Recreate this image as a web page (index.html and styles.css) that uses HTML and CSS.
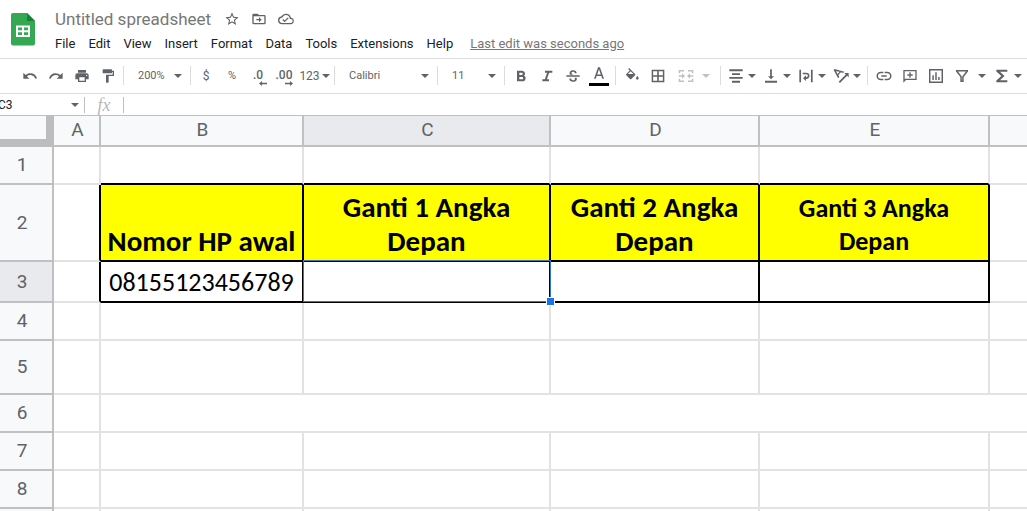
FILE: index.html
```html
<!DOCTYPE html>
<html lang="en">
<head>
    <meta charset="UTF-8">
    <meta name="viewport" content="width=device-width, initial-scale=1.0">
    <title>Untitled spreadsheet</title>
    <link rel="stylesheet" href="styles.css">
</head>
<body>
    <header class="header">
        <a class="logo" href="#" aria-label="Sheets home">
            <svg width="24" height="33" viewBox="0 0 24 33">
                <path fill="#34a853" d="M2 0h14l8 8v22.500a2 2 0 0 1-2 2H2a2 2 0 0 1-2-2V2a2 2 0 0 1 2-2z"/>
                <path fill="#188038" d="M16 0l8 8h-8z"/>
                <path fill="#fff" fill-rule="evenodd" d="M5 12.500h14v11.500H5zM7 14.500v2.700h4v-2.700zM13 14.500v2.700h4v-2.700zM7 19.300v2.700h4v-2.700zM13 19.300v2.700h4v-2.700z"/>
            </svg>
        </a>
        <div class="header-main">
            <div class="title-row">
                <input class="doc-title" type="text" value="Untitled spreadsheet" aria-label="Document name">
                <button class="title-button" aria-label="Star">
                    <svg width="16" height="16" viewBox="0 0 24 24"><path d="M22 9.240l-7.190-.620L12 2 9.190 8.630 2 9.240l5.460 4.730L5.820 21 12 17.270 18.180 21l-1.630-7.030L22 9.240zM12 15.400l-3.760 2.270 1-4.280-3.320-2.880 4.380-.380L12 6.100l1.710 4.040 4.380.380-3.320 2.880 1 4.280L12 15.400z"/></svg>
                </button>
                <button class="title-button" aria-label="Move">
                    <svg width="16" height="16" viewBox="0 0 24 24"><path d="M20 6h-8l-2-2H4a2 2 0 0 0-2 2v12a2 2 0 0 0 2 2h16a2 2 0 0 0 2-2V8a2 2 0 0 0-2-2zm0 12H4V8h16v10zM12 17l4-4-4-4v3H8v2h4z"/></svg>
                </button>
                <button class="title-button" aria-label="Document status">
                    <svg width="16" height="16" viewBox="0 0 24 24"><path d="M19.350 10.040A7.490 7.490 0 0 0 12 4C9.110 4 6.600 5.640 5.350 8.040A6 6 0 0 0 6 20h13a5 5 0 0 0 .350-9.960zM19 18H6a4 4 0 0 1-.440-7.970l1.070-.110.500-.950A5.470 5.470 0 0 1 12 6c2.620 0 4.880 1.860 5.390 4.430l.300 1.500 1.530.110A2.980 2.980 0 0 1 19 18zm-9-3.800l-2.100-2.100-1.400 1.400L10 17l6-6-1.400-1.400z"/></svg>
                </button>
            </div>
            <nav class="menu">
                <button>File</button>
                <button>Edit</button>
                <button>View</button>
                <button>Insert</button>
                <button>Format</button>
                <button>Data</button>
                <button>Tools</button>
                <button>Extensions</button>
                <button>Help</button>
                <a href="#" class="last-edit">Last edit was seconds ago</a>
            </nav>
        </div>
    </header>

    <div class="toolbar">
        <div class="group group-first">
            <button class="tool" aria-label="Undo"><svg class="icon" viewBox="0 0 24 24"><path d="M12.500 8c-2.650 0-5.050.990-6.900 2.600L2 7v9h9l-3.620-3.620A8.020 8.020 0 0 1 20.090 16l2.370-.780A10.500 10.500 0 0 0 12.500 8z"/></svg></button>
            <button class="tool" aria-label="Redo"><svg class="icon" viewBox="0 0 24 24"><path d="M18.400 10.600A10.480 10.480 0 0 0 11.500 8 10.500 10.500 0 0 0 1.540 15.220L3.900 16a8.020 8.020 0 0 1 12.710-3.620L13 16h9V7z"/></svg></button>
            <button class="tool" aria-label="Print"><svg class="icon" viewBox="0 0 24 24"><path d="M19 8H5a3 3 0 0 0-3 3v6h4v4h12v-4h4v-6a3 3 0 0 0-3-3zm-3 11H8v-5h8v5zm3-7a1 1 0 1 1 0-2 1 1 0 0 1 0 2zM18 3H6v4h12z"/></svg></button>
            <button class="tool" aria-label="Paint format"><svg class="icon" viewBox="0 0 24 24"><path d="M18 4V3a1 1 0 0 0-1-1H5a1 1 0 0 0-1 1v4a1 1 0 0 0 1 1h12a1 1 0 0 0 1-1V6h1v4H9v11a1 1 0 0 0 1 1h2a1 1 0 0 0 1-1v-9h8V4z"/></svg></button>
        </div>
        <div class="group">
            <div class="pick pick-small">
                <select aria-label="Zoom"><option>200%</option></select>
                <span class="caret"></span>
            </div>
        </div>
        <div class="group">
            <button class="tool" aria-label="Format as currency">$</button>
            <button class="tool tool-percent" aria-label="Format as percent">%</button>
            <button class="tool decimals" aria-label="Decrease decimal places">.0<svg width="8" height="5" viewBox="0 0 8 5"><path d="M0 2.500L3 0v1.700h5v1.600H3V5z"/></svg></button>
            <button class="tool decimals" aria-label="Increase decimal places">.00<svg width="8" height="5" viewBox="0 0 8 5"><path d="M8 2.500L5 0v1.700H0v1.600h5V5z"/></svg></button>
            <button class="tool formats" aria-label="More formats">123<span class="caret"></span></button>
        </div>
        <div class="group">
            <div class="pick pick-font">
                <select aria-label="Font"><option>Calibri</option></select>
                <span class="caret"></span>
            </div>
        </div>
        <div class="group">
            <div class="pick pick-small">
                <select aria-label="Font size"><option>11</option></select>
                <span class="caret"></span>
            </div>
        </div>
        <div class="group roomy">
            <button class="tool" aria-label="Bold"><svg class="icon" viewBox="0 0 24 24"><path d="M16.400 11.800c1-.700 1.700-1.900 1.700-3C18.100 6 16 4 13.300 4H6v16h8.200c2.700 0 4.700-2.200 4.700-4.700 0-1.700-1-3.100-2.500-3.500zM9.500 7H13a1.700 1.700 0 0 1 0 3.400H9.500zm4 10h-4v-3.600h4a1.800 1.800 0 0 1 0 3.600z"/></svg></button>
            <button class="tool" aria-label="Italic"><svg class="icon" viewBox="0 0 24 24"><path d="M9 4v3h3.200L8.800 17H5v3h10v-3h-3.200l3.400-10H20V4z"/></svg></button>
            <button class="tool" aria-label="Strikethrough"><svg class="icon" viewBox="0 0 24 24"><path d="M2 11h20v2.300H2zM7.300 10C6 6 8.200 3.300 12.200 3.300c3.200 0 5.200 1.700 5.300 4.500h-2.800c0-1.400-.900-2.200-2.600-2.200-2.600 0-3.300 2-1.500 3.400l1.700 1zM17.500 14.500c1 3.800-1.400 6.200-5.300 6.200-3.500 0-5.700-1.900-5.800-4.900h2.800c.1 1.700 1.200 2.600 3.100 2.600 2.200 0 3.200-1.500 2.200-3.900z"/></svg></button>
            <button class="tool text-color" aria-label="Text color"><svg class="icon" viewBox="0 0 24 24"><path d="M10.600 2L4.500 19h2.600l1.400-4h7l1.400 4h2.600L13.400 2zm-1.300 10.800L12 5l2.700 7.800z"/></svg></button>
        </div>
        <div class="group roomy">
            <button class="tool" aria-label="Fill color"><svg class="icon" viewBox="0 0 24 24"><path fill-rule="evenodd" d="M16.560 8.940L7.620 0 6.210 1.410l2.380 2.380-5.150 5.150a1.490 1.490 0 0 0 0 2.120l5.500 5.500c.600.590 1.550.590 2.120 0l5.500-5.500a1.490 1.490 0 0 0 0-2.120zM5.800 9L10 4.800 14.200 9zM20 12s-2 2.170-2 3.500a2 2 0 0 0 4 0C22 14.170 20 12 20 12z"/></svg></button>
            <button class="tool" aria-label="Borders"><svg class="icon" viewBox="0 0 24 24"><path d="M2.500 2.500v19h19v-19zm8.300 16.800H4.700v-6.100h6.100zm0-8.500H4.700V4.700h6.100zm8.500 8.500h-6.100v-6.100h6.100zm0-8.500h-6.100V4.700h6.100z"/></svg></button>
            <button class="tool merge" aria-label="Merge cells" disabled><svg class="icon" viewBox="0 0 24 24"><path d="M1 3h8v2.200H3.200V8H1zM15 3h8v5h-2.200V5.200H15zM1 16h2.200v2.800H9V21H1zM20.800 16H23v5h-8v-2.200h5.800zM1 11h5V8l4.500 4L6 16v-3H1zM23 11h-5V8l-4.500 4 4.500 4v-3h5z"/></svg><span class="caret"></span></button>
        </div>
        <div class="group roomy">
            <button class="tool drop" aria-label="Horizontal align"><svg class="icon" viewBox="0 0 24 24"><path d="M2 2h20v2.800H2zM6 7.700h12v2.800H6zM2 13.500h20v2.800H2zM6 19.200h12V22H6z"/></svg><span class="caret"></span></button>
            <button class="tool drop" aria-label="Vertical align"><svg class="icon" viewBox="0 0 24 24"><path d="M16.500 12.500H13.300V2h-2.600v10.500H7.500L12 17zM3 19.300h18V22H3z"/></svg><span class="caret"></span></button>
            <button class="tool drop" aria-label="Text wrapping"><svg class="icon" viewBox="0 0 24 24"><path d="M2 2.500h2.600v19H2zM19.400 2.500H22v19h-2.600zM7 7h5.500a4.700 4.700 0 0 1 0 9.400H12v3.100l-4.500-4.300L12 11v2.900h.500a2.200 2.200 0 0 0 0-4.400H7z"/></svg><span class="caret"></span></button>
            <button class="tool drop" aria-label="Text rotation"><svg class="icon" viewBox="0 0 24 24"><path fill-rule="evenodd" d="M1 3l1.500-1.500L17 5.500 15.300 7.500l-3.300-1-4 4 1.500 3L7.600 15.500zM4.500 4.700l2.300 4.300L10 5.800zM8.500 20.500L19.200 9.800 17 7.600h6.500v6.500l-2.300-2.300L10.500 22.500z"/></svg><span class="caret"></span></button>
        </div>
        <div class="group roomy">
            <button class="tool" aria-label="Insert link"><svg class="icon" viewBox="0 0 24 24"><path d="M3 12a4 4 0 0 1 4-4h4V5.700H7a6.300 6.300 0 0 0 0 12.600h4V16H7a4 4 0 0 1-4-4zm5 1.200h8v-2.400H8zm9-7.500h-4V8h4a4 4 0 0 1 0 8h-4v2.300h4a6.300 6.300 0 0 0 0-12.600z"/></svg></button>
            <button class="tool" aria-label="Insert comment"><svg class="icon" viewBox="0 0 24 24"><path d="M2 3v19l4-4h16V3zm18 13H4V5h16zM11 14.500h2v-3h3v-2h-3v-3h-2v3H8v2h3z"/></svg></button>
            <button class="tool" aria-label="Insert chart"><svg class="icon" viewBox="0 0 24 24"><path d="M1.500 1.500v21h21v-21zm18.800 18.800H3.700V3.700h16.600zM6.500 11h2.200v7H6.500zM10.900 6.500h2.200V18h-2.200zM15.300 13.500h2.200V18h-2.200z"/></svg></button>
            <button class="tool filter" aria-label="Create a filter"><svg class="icon" viewBox="0 0 24 24"><path d="M3 3v2.200l6.500 8.300V21h5v-7.500L21 5.200V3zm9.300 9.700v6.100h-.600v-6.100L6 5.200h12z"/></svg><span class="caret"></span></button>
            <button class="tool drop" aria-label="Functions"><svg class="icon" viewBox="0 0 24 24"><path d="M20 2.500H3.500v2.800l7.500 6.700-7.500 6.700v2.800H20v-3.200H9L15.800 12 9 5.700h11z"/></svg><span class="caret"></span></button>
        </div>
    </div>

    <div class="formula-bar">
        <input class="name-box" type="text" value="C3" aria-label="Name box">
        <span class="caret"></span>
        <label class="fx" for="formula">fx</label>
        <input class="formula" id="formula" type="text">
    </div>

    <main class="sheet-view">
        <table class="sheet">
            <colgroup>
                <col class="col-head">
                <col class="col-a">
                <col class="col-b">
                <col class="col-c">
                <col class="col-d">
                <col class="col-e">
                <col>
            </colgroup>
            <thead>
                <tr>
                    <td class="corner"></td>
                    <th>A</th>
                    <th>B</th>
                    <th class="active">C</th>
                    <th>D</th>
                    <th>E</th>
                    <th></th>
                </tr>
            </thead>
            <tbody>
                <tr class="above-box">
                    <th>1</th>
                    <td></td>
                    <td class="boxed"></td>
                    <td class="boxed"></td>
                    <td class="boxed"></td>
                    <td class="boxed"></td>
                    <td></td>
                </tr>
                <tr class="box-row titles">
                    <th>2</th>
                    <td class="box-left"></td>
                    <td class="boxed title">Nomor HP awal</td>
                    <td class="boxed title">Ganti 1 Angka Depan</td>
                    <td class="boxed title">Ganti 2 Angka Depan</td>
                    <td class="boxed title title-small">Ganti 3 Angka Depan</td>
                    <td></td>
                </tr>
                <tr class="box-row numbers">
                    <th class="active">3</th>
                    <td class="box-left"></td>
                    <td class="boxed">08155123456789</td>
                    <td class="boxed selected"><div class="selection"></div></td>
                    <td class="boxed"></td>
                    <td class="boxed"></td>
                    <td></td>
                </tr>
                <tr>
                    <th>4</th>
                    <td></td><td></td><td></td><td></td><td></td><td></td>
                </tr>
                <tr class="tall">
                    <th>5</th>
                    <td></td><td></td><td></td><td></td><td></td><td></td>
                </tr>
                <tr>
                    <th>6</th>
                    <td></td><td colspan="5"></td>
                </tr>
                <tr>
                    <th>7</th>
                    <td></td><td></td><td></td><td></td><td></td><td></td>
                </tr>
                <tr>
                    <th>8</th>
                    <td></td><td></td><td></td><td></td><td></td><td></td>
                </tr>
                <tr class="cut-off">
                    <th></th>
                    <td></td><td></td><td></td><td></td><td></td><td></td>
                </tr>
            </tbody>
        </table>
    </main>
</body>
</html>
```
FILE: styles.css
```css
* {
    box-sizing: border-box;
}
body {
    display: flex;
    flex-direction: column;
    margin: 0;
    height: 100vh;
    overflow: hidden;
    background: #fff;
    color: #202124;
    font-family: Roboto, Arial, sans-serif;
    font-size: 13px;
}
button, input, select {
    margin: 0;
    padding: 0;
    border: none;
    background: none;
    color: inherit;
    font: inherit;
    outline: none;
}
button {
    cursor: pointer;
}
svg {
    display: block;
    fill: currentColor;
}

/* header */
.header {
    display: flex;
    flex-shrink: 0;
    height: 59px;
    border-bottom: 1px solid #dadce0;
}
.logo {
    padding: 13px 13px 0 11px;
}
.header-main {
    padding: 7px 0 0 7px;
}
.title-row {
    display: flex;
    align-items: center;
    gap: 11px;
    height: 24px;
    color: #5f6368;
}
.doc-title {
    width: 158px;
    height: 24px;
    color: #777;
    font-size: 17px;
}
.menu {
    display: flex;
    align-items: center;
    gap: 13px;
    height: 24px;
}
.last-edit {
    margin-left: 4px;
    color: #777;
}

/* toolbar */
.toolbar {
    display: flex;
    flex-shrink: 0;
    align-items: center;
    height: 35px;
    padding: 0 0 1px 14px;
    border-bottom: 1px solid #dadce0;
    color: #5f6368;
    font-size: 12px;
}
.group {
    display: flex;
    flex-shrink: 0;
    align-items: center;
    height: 19px;
    padding: 0 2px;
    border-left: 1px solid #dadce0;
}
.group-first {
    border-left-color: transparent;
}
.roomy {
    padding: 0 3px;
}
.tool {
    display: flex;
    align-items: center;
    justify-content: center;
    width: 26px;
    height: 26px;
}
.icon {
    flex-shrink: 0;
    width: 16px;
    height: 16px;
}
.caret {
    flex-shrink: 0;
    width: 0;
    height: 0;
    border: 4px solid transparent;
    border-top-color: currentColor;
    border-bottom: none;
}
.tool-percent, .pick-small {
    font-size: 11px;
}
.decimals {
    flex-direction: column;
    align-items: center;
    font-weight: 500;
    line-height: 12px;
    padding-top: 4px;
}
.decimals svg {
    align-self: flex-end;
    margin-right: 4px;
}
.formats {
    width: 35px;
    gap: 2px;
}
.pick {
    display: flex;
    align-items: center;
    padding: 0 6px 0 12px;
}
.pick select {
    flex: 1;
    min-width: 0;
    appearance: none;
}
.pick-small {
    width: 62px;
}
.pick-font {
    width: 98px;
    font-size: 11px;
}
.text-color .icon {
    box-sizing: content-box;
    padding: 0 2px 1px;
    border-bottom: 3px solid #000;
}
.merge {
    width: 46px;
    gap: 8px;
    color: #bdc1c6;
    cursor: default;
}
.drop {
    width: 35px;
    gap: 4px;
}
.filter {
    width: 41px;
    gap: 8px;
}

/* formula bar */
.formula-bar {
    display: flex;
    flex-shrink: 0;
    align-items: center;
    height: 22px;
    border-bottom: 1px solid #c0c0c0;
    color: #5f6368;
}
.name-box {
    width: 73px;
    margin-left: -2px;
    color: #202124;
    font-size: 12px;
}
.fx {
    width: 40px;
    margin-left: 5px;
    border: solid #c0c0c0;
    border-width: 0 1px;
    color: #b7b7b7;
    font: italic 18px/16px "Liberation Serif", serif;
    text-align: center;
}
.formula {
    flex: 1;
    padding-left: 6px;
}

/* grid */
.sheet-view {
    flex: 1;
    min-height: 0;
    overflow: hidden;
}
.sheet {
    width: 100%;
    table-layout: fixed;
    border-spacing: 0;
}
.col-head {
    width: 54px;
}
.col-a {
    width: 47px;
}
.col-b {
    width: 203px;
}
.col-c {
    width: 247px;
}
.col-d {
    width: 209px;
}
.col-e {
    width: 230px;
}
.sheet th, .sheet td {
    padding: 0;
    border: solid #e2e2e2;
    border-width: 0 2px 2px 0;
}
.sheet th {
    background: #f8f9fa;
    border-color: #c0c0c0;
    color: #5f6368;
    font-size: 19px;
    font-weight: normal;
    line-height: 22px;
}
.sheet tbody th {
    padding-right: 8px;
}
.sheet th.active {
    background: #e8eaed;
}
.sheet tr {
    height: 38px;
}
.sheet thead tr {
    height: 31px;
}
.sheet thead th {
    padding: 0 0 2px 2px;
}
.sheet td:last-child, .sheet thead th:last-child {
    border-right: none;
}
.sheet .corner {
    background: #f8f9fa;
    border: solid #bdbdbd;
    border-width: 0 8px 8px 0;
}
.sheet .titles {
    height: 77px;
}
.sheet .numbers {
    height: 41px;
}
.sheet .tall {
    height: 54px;
}
.sheet .cut-off {
    height: 2px;
}
.cut-off th, .cut-off td {
    border-bottom-width: 0;
}

/* the black bordered table inside the sheet */
.above-box .boxed {
    border-bottom-color: #000;
}
.box-row .boxed {
    border-color: #000;
    color: #000;
    font-family: Calibri, Carlito, Lato, sans-serif;
    font-size: 26px;
    line-height: 34px;
    text-align: center;
}
.box-row .box-left {
    border-right-color: #000;
}
.box-row .title {
    padding: 0 6px 2px;
    background: #ff0;
    font-size: 29px;
    font-weight: bold;
    vertical-align: bottom;
}
.box-row .title-small {
    font-size: 26px;
    line-height: 33px;
}
.selected {
    position: relative;
}
.selection {
    position: absolute;
    inset: -2px -2px -1px -1px;
    z-index: 1;
    border: 1px solid #3577c4;
}
.selection::after {
    content: "";
    position: absolute;
    right: -5px;
    bottom: -5px;
    width: 7px;
    height: 7px;
    border: 1px solid #fff;
    background: #1a73e8;
}
```
